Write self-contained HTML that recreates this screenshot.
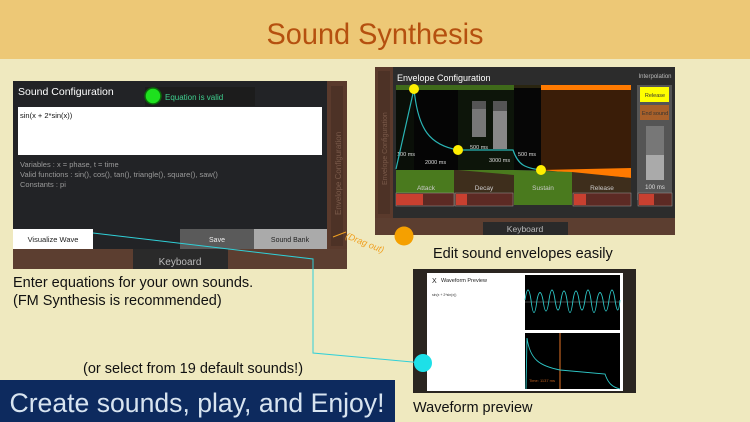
<!DOCTYPE html>
<html><head><meta charset="utf-8"><style>
html,body{margin:0;padding:0;width:750px;height:422px;overflow:hidden;background:#efe9bf;font-family:"Liberation Sans",sans-serif}
</style></head><body>
<svg width="750" height="422" viewBox="0 0 750 422" xmlns="http://www.w3.org/2000/svg" font-family="Liberation Sans, sans-serif">
<rect width="750" height="422" fill="#efe9bf"/>
<rect width="750" height="59" fill="#edc876"/>
<text x="375" y="44" text-anchor="middle" font-size="30" fill="#b5500f" textLength="217" lengthAdjust="spacingAndGlyphs">Sound Synthesis</text>

<!-- Left panel -->
<rect x="13" y="81" width="334" height="188" fill="#222326"/>
<rect x="327" y="81" width="20" height="168" fill="#5a3a2c"/>
<rect x="331" y="86" width="12" height="160" fill="#4d3226"/>
<text transform="translate(341,215) rotate(-90)" font-size="8" fill="#7a5a4a">Envelope Configuration</text>
<rect x="13" y="249" width="334" height="20" fill="#5c3e30"/>
<rect x="133" y="249" width="95" height="20" fill="#2a2a2a"/>
<text x="180" y="265" text-anchor="middle" font-size="10" fill="#bbb">Keyboard</text>
<text x="18" y="95" font-size="10.5" fill="#fff">Sound Configuration</text>
<rect x="145" y="87" width="110" height="19" fill="#1c1c1c"/>
<circle cx="153" cy="96" r="8" fill="#1ee01e" stroke="#0a6a0a" stroke-width="1.5"/>
<text x="165" y="100" font-size="8" fill="#3fcf8f">Equation is valid</text>
<rect x="18" y="107" width="304" height="48" fill="#fff"/>
<text x="20" y="118" font-size="7.5" fill="#111">sin(x + 2*sin(x))</text>
<g font-size="7.5" fill="#9a9a9a">
<text x="20" y="167">Variables : x = phase, t = time</text>
<text x="20" y="177">Valid functions : sin(), cos(), tan(), triangle(), square(), saw()</text>
<text x="20" y="187">Constants : pi</text>
</g>
<rect x="13" y="229" width="80" height="20" fill="#fff"/>
<text x="53" y="242" text-anchor="middle" font-size="7.5" fill="#222">Visualize Wave</text>
<rect x="180" y="229" width="74" height="20" fill="#5a5a5a"/>
<text x="217" y="242" text-anchor="middle" font-size="7" fill="#eee">Save</text>
<rect x="254" y="229" width="73" height="20" fill="#aaa"/>
<text x="290" y="242" text-anchor="middle" font-size="7" fill="#222">Sound Bank</text>

<!-- Envelope panel -->
<rect x="375" y="67" width="300" height="168" fill="#2c2c2c"/>
<rect x="375" y="67" width="18" height="151" fill="#5a3a2c"/>
<rect x="378" y="71" width="12" height="143" fill="#4d3226"/>
<text transform="translate(387,185) rotate(-90)" font-size="7" fill="#7a5a4a">Envelope Configuration</text>
<rect x="375" y="218" width="300" height="17" fill="#5c3e30"/>
<rect x="483" y="222" width="85" height="13" fill="#2a2a2a"/>
<text x="525" y="232" text-anchor="middle" font-size="8.5" fill="#bbb">Keyboard</text>
<text x="397" y="81" font-size="9" fill="#fff">Envelope Configuration</text>
<text x="655" y="78" text-anchor="middle" font-size="6" fill="#bbb">Interpolation</text>

<rect x="396" y="85" width="62" height="85" fill="#0a0f08"/>
<rect x="414" y="90" width="44" height="80" fill="#050505"/>
<rect x="458" y="85" width="56" height="85" fill="#0d150a"/>
<rect x="514" y="85" width="27" height="85" fill="#060606"/>
<rect x="541" y="85" width="90" height="85" fill="#3a1d08"/>
<rect x="396" y="85" width="62" height="5" fill="#3f6a1a"/>
<rect x="458" y="85" width="56" height="5" fill="#3f6a1a"/>
<rect x="514" y="85" width="27" height="3" fill="#2a2510"/>
<rect x="541" y="85" width="90" height="5" fill="#ff7a00"/>
<rect x="472" y="101" width="14" height="36" fill="#777"/>
<rect x="472" y="101" width="14" height="8" fill="#555"/>
<rect x="493" y="101" width="14" height="48" fill="#888"/>
<rect x="493" y="101" width="14" height="10" fill="#555"/>
<polygon points="541,170 631,168 631,178" fill="#ff7a00"/>
<polygon points="396,170 454,170 458,175 458,205 396,205" fill="#4a7a1e"/>
<polygon points="454,170 514,170 514,205 454,205" fill="#3e2e1c"/>
<polygon points="514,170 572,172 572,205 514,205" fill="#4a7a1e"/>
<polygon points="572,172 631,178 631,205 572,205" fill="#3e2e1c"/>
<polygon points="458,170 514,175 514,170" fill="#4a7a1e"/>
<g font-size="6.5" fill="#ccc" text-anchor="middle">
<text x="426" y="190">Attack</text><text x="484" y="190">Decay</text><text x="543" y="190">Sustain</text><text x="602" y="190">Release</text>
</g>
<g font-size="5.5" fill="#ddd">
<text x="397" y="156">100 ms</text><text x="425" y="164">2000 ms</text><text x="470" y="149">500 ms</text><text x="489" y="162">3000 ms</text><text x="518" y="156">500 ms</text>
</g>
<path d="M396,169 L414,89 C418,130 430,145 458,150 L513,150 C518,165 525,168 541,170" fill="none" stroke="#2ab5b5" stroke-width="1.2"/>
<circle cx="414" cy="89" r="5" fill="#ffee00"/>
<circle cx="458" cy="150" r="5" fill="#ffee00"/>
<circle cx="541" cy="170" r="5" fill="#ffee00"/>
<rect x="396" y="193" width="58" height="13" fill="#5c2a24" stroke="#999" stroke-width="0.5"/>
<rect x="396" y="194" width="27" height="11" fill="#c84030"/>
<rect x="455" y="193" width="58" height="13" fill="#5c2a24" stroke="#999" stroke-width="0.5"/>
<rect x="456" y="194" width="11" height="11" fill="#c84030"/>
<rect x="573" y="193" width="58" height="13" fill="#5c2a24" stroke="#999" stroke-width="0.5"/>
<rect x="574" y="194" width="12" height="11" fill="#c84030"/>
<rect x="637" y="85" width="35" height="115" fill="#555"/>
<rect x="640" y="87" width="29" height="15" fill="#ffff00"/>
<text x="655" y="97" text-anchor="middle" font-size="5.5" fill="#333">Release</text>
<rect x="640" y="105" width="29" height="15" fill="#a8602a"/>
<text x="655" y="115" text-anchor="middle" font-size="5.5" fill="#333">End sound</text>
<rect x="646" y="126" width="18" height="54" fill="#777"/>
<rect x="646" y="155" width="18" height="25" fill="#aaa"/>
<text x="655" y="189" text-anchor="middle" font-size="6" fill="#ddd">100 ms</text>
<rect x="638" y="193" width="34" height="13" fill="#5c2a24" stroke="#999" stroke-width="0.5"/>
<rect x="639" y="194" width="15" height="11" fill="#c84030"/>

<!-- drag -->
<text transform="translate(345,238) rotate(22)" font-size="9" fill="#f0a020" font-style="italic">(Drag out)</text>
<line x1="333" y1="237" x2="346" y2="232" stroke="#f0a020" stroke-width="1"/>
<circle cx="404" cy="236" r="9.5" fill="#f5a000"/>

<text x="433" y="258" font-size="14.5" fill="#111">Edit sound envelopes easily</text>
<text x="13" y="287" font-size="14.5" fill="#111">Enter equations for your own sounds.</text>
<text x="13" y="305" font-size="14.5" fill="#111">(FM Synthesis is recommended)</text>
<text x="83" y="373" font-size="14.5" fill="#111">(or select from 19 default sounds!)</text>

<!-- waveform -->
<rect x="413" y="269" width="223" height="124" fill="#2a2520"/>
<rect x="427" y="273" width="196" height="118" fill="#fff"/>
<text x="432" y="283" font-size="7" fill="#222">X</text>
<text x="441" y="282" font-size="5.5" fill="#222">Waveform Preview</text>
<text x="432" y="296" font-size="3.5" fill="#333">sin(x + 2*sin(x))</text>
<rect x="525" y="275" width="95" height="55" fill="#000"/>
<line x1="525" y1="302" x2="620" y2="302" stroke="#888" stroke-width="0.6"/>
<path d="M525,300 Q528,280 531,300 Q534,325 537,300 Q540,285 543,300 Q546,322 549,300 Q552,280 555,300 Q558,320 561,300 Q564,282 567,300 Q570,325 573,300 Q576,282 579,300 Q582,320 585,300 Q588,280 591,300 Q594,325 597,300 Q600,285 603,300 Q606,322 609,300 Q612,280 615,300 Q618,320 620,300" fill="none" stroke="#2ec8c8" stroke-width="0.9"/>
<rect x="525" y="333" width="95" height="56" fill="#000"/>
<line x1="560" y1="333" x2="560" y2="389" stroke="#c06020" stroke-width="1.2"/>
<path d="M526,389 L527,338 C530,360 540,366 560,370 L605,374 C608,383 612,387 620,389" fill="none" stroke="#2ec8c8" stroke-width="0.9"/>
<text x="529" y="382" font-size="4" fill="#c06020">Time: 1137 ms</text>
<text x="413" y="412" font-size="14.5" fill="#111">Waveform preview</text>

<!-- cyan connector -->
<polyline points="93,233 313,259 313,353 423,363" fill="none" stroke="#30d0d8" stroke-width="1"/>
<circle cx="423" cy="363" r="9" fill="#1de0e8"/>

<!-- banner -->
<rect x="0" y="380" width="395" height="42" fill="#0d2a5e"/>
<text x="197" y="412" text-anchor="middle" font-size="27" fill="#d8e4f0" textLength="375" lengthAdjust="spacingAndGlyphs">Create sounds, play, and Enjoy!</text>
</svg>
</body></html>
